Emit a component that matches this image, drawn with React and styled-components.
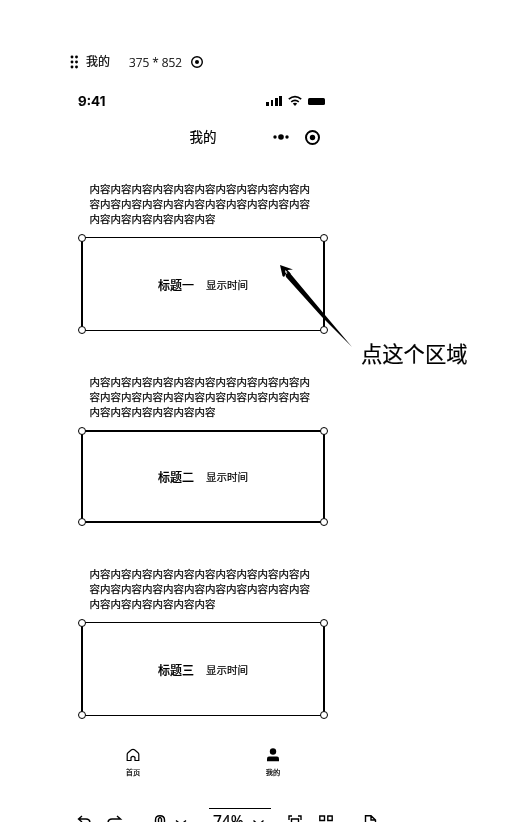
import React from "react";
import styled, { createGlobalStyle } from "styled-components";

const Global = createGlobalStyle`
  * { box-sizing: border-box; }
  html, body { margin: 0; background: #fff; overflow: hidden; }
  body { font-family: "Inter", "Noto Sans CJK SC", sans-serif; color: #000; }
  svg { display: block; flex: none; overflow: visible; }
`;

const Canvas = styled.main`
  position: relative;
  width: 507px;
  height: 822px;
  padding-top: 52px;
  overflow: hidden;
  background: #fff;
  filter: grayscale(1);
  -webkit-text-stroke: 0.2px #000;
`;

const ArtboardHeader = styled.header`
  display: flex;
  align-items: center;
  height: 20px;
  padding-left: 70px;
  font-size: 12px;
  line-height: 20px;
`;

const ArtboardName = styled.span`
  width: 43px;
  margin-left: 7px;
  white-space: nowrap;
`;

const ArtboardSize = styled.span`
  width: 62px;
  font-family: "Noto Sans", sans-serif;
  font-weight: 300;
  font-size: 11.8px;
  white-space: nowrap;
`;

const Phone = styled.section`
  display: flex;
  flex-direction: column;
  width: 280px;
  margin-left: 63px;
`;

const StatusBar = styled.div`
  display: flex;
  align-items: center;
  justify-content: space-between;
  height: 20px;
  margin-top: 19px;
  padding: 0 18px 0 15px;
`;

const Clock = styled.span`
  font-size: 13.6px;
  font-weight: 600;
  line-height: 20px;
`;

const StatusIcons = styled.div`
  display: flex;
  align-items: center;
  gap: 6px;
`;

const TitleBar = styled.div`
  display: grid;
  grid-template-columns: 1fr auto 1fr;
  align-items: center;
  height: 24px;
  margin-top: 14px;
  padding-right: 23px;
`;

const PageTitle = styled.h1`
  grid-column: 2;
  margin: 0 0 0 23px;
  font-size: 13.5px;
  font-weight: 400;
  line-height: 24px;
`;

const Capsule = styled.div`
  display: flex;
  justify-content: flex-end;
  align-items: center;
  gap: 16px;
`;

const Feed = styled.div`
  display: flex;
  flex-direction: column;
  gap: 43px;
  margin-top: 32px;
  padding-left: 18px;
`;

const Entry = styled.article`
  display: flex;
  flex-direction: column;
  gap: 11px;
  height: 149.5px;
`;

const Copy = styled.p`
  width: 222px;
  height: 45px;
  margin: 0 0 0 8.5px;
  font-family: "Noto Sans CJK SC", sans-serif;
  font-size: 10.5px;
  line-height: 15px;
  word-break: break-all;
`;

const Selection = styled.div`
  position: relative;
  display: flex;
  align-items: center;
  gap: 12px;
  width: 244px;
  height: 94px;
  padding: 4px 0 0 75px;
  border-style: solid;
  border-color: #000;
  border-width: ${(p) => (p.$heavy ? "2px" : "1px 2px")};
`;

const Handle = styled.i`
  position: absolute;
  width: 8px;
  height: 8px;
  border: 1.5px solid #000;
  border-radius: 50%;
  background: #fff;
  ${(p) => (p.$bottom ? "bottom" : "top")}: ${(p) => (p.$heavy ? "-5px" : "-4px")};
  ${(p) => (p.$right ? "right" : "left")}: -5px;
`;

const EntryTitle = styled.h2`
  margin: 0;
  font-size: 12px;
  font-weight: 500;
  line-height: 18px;
`;

const EntryTime = styled.span`
  font-size: 10.5px;
  line-height: 18px;
`;

const TabBar = styled.nav`
  display: grid;
  grid-template-columns: 1fr 1fr;
  margin-top: 32px;
`;

const Tab = styled.div`
  display: flex;
  flex-direction: column;
  align-items: center;
  gap: 6px;
  height: 40px;
  font-size: 7.3px;
  line-height: 10px;
`;

const Toolbar = styled.footer`
  display: flex;
  align-items: flex-start;
  height: 26px;
  margin-top: 20px;
  padding-left: 77px;
`;

const Tool = styled.span`
  width: ${(p) => p.$w}px;
  padding-top: 7px;
`;

const Zoom = styled.div`
  display: flex;
  align-items: flex-start;
  gap: 9px;
  width: 62px;
  height: 26px;
  margin-right: 17px;
  padding-left: 4px;
  border-top: 1px solid #000;
  font-family: "Noto Sans", sans-serif;
  font-size: 15.5px;
  line-height: 25px;
`;

const ZoomArrow = styled.span`
  padding-top: 10px;
`;

const Arrow = styled.svg`
  position: absolute;
  left: 279px;
  top: 264px;
`;

const Note = styled.strong`
  position: absolute;
  left: 361px;
  top: 338px;
  font-size: 21.3px;
  font-weight: 400;
  line-height: 32px;
  white-space: nowrap;
`;

const Grip = () => (
  <svg width="9" height="14" viewBox="0 0 9 14">
    {[2, 7, 12].map((y) => [2, 6.5].map((x) => <circle key={`${x}-${y}`} cx={x} cy={y} r="1.45" />))}
  </svg>
);

const Target = ({ size, stroke, dot }) => (
  <svg width={size} height={size} viewBox={`0 0 ${size} ${size}`}>
    <circle cx={size / 2} cy={size / 2} r={(size - stroke) / 2} fill="none" stroke="#000" strokeWidth={stroke} />
    <circle cx={size / 2} cy={size / 2} r={dot} />
  </svg>
);

const Signal = () => (
  <svg width="16" height="10" viewBox="0 0 16 10" shapeRendering="crispEdges">
    <path d="M0 6h3v4H0zM5 4h2v6H5zM9 2h3v8H9zM13 0h3v10h-3z" />
  </svg>
);

const Wifi = () => (
  <svg width="14" height="10" viewBox="0 0 14 10">
    <path d="M.8 3.2Q7-2 13.2 3.2M3.2 5.8Q7 2.8 10.8 5.8" fill="none" stroke="#000" strokeWidth="1.7" />
    <path d="M4.8 7.4Q7 6 9.2 7.4L7 10z" />
  </svg>
);

const Battery = () => (
  <svg width="17" height="7" viewBox="0 0 17 7"><rect width="17" height="7" rx="1.5" /></svg>
);

const More = () => (
  <svg width="16" height="6" viewBox="0 0 16 6">
    <circle cx="2" cy="3" r="1.7" /><circle cx="8" cy="3" r="2.8" /><circle cx="14" cy="3" r="1.7" />
  </svg>
);

const Home = () => (
  <svg width="14" height="14" viewBox="0 0 14 14" fill="none" stroke="#000" strokeWidth="1.2">
    <path d="M1.2 12.5V6.5Q1.2 5.5 2 4.8L5.5 1.8Q7 .8 8.5 1.8L12 4.8Q12.8 5.5 12.8 6.5V12.5H9V9.5Q7 7.2 5 9.5V12.5Z" />
  </svg>
);

const Person = () => (
  <svg width="14" height="14" viewBox="0 0 14 14">
    <circle cx="7" cy="3.5" r="3.2" />
    <path d="M1 13.3V10.5Q1 8.5 3 8.5H11Q13 8.5 13 10.5V13.3Z" />
  </svg>
);

const Stroke = ({ w = 14, d }) => (
  <svg width={w} height="16" viewBox={`0 0 ${w} 16`} fill="none" stroke="#000" strokeWidth="1.4"><path d={d} /></svg>
);

const COPY = "内容".repeat(27);

const entries = [
  { title: "标题一", heavy: false },
  { title: "标题二", heavy: true },
  { title: "标题三", heavy: false },
];

function FeedEntry({ title, heavy }) {
  return (
    <Entry>
      <Copy>{COPY}</Copy>
      <Selection $heavy={heavy}>
        <EntryTitle>{title}</EntryTitle>
        <EntryTime>显示时间</EntryTime>
        <Handle $heavy={heavy} />
        <Handle $heavy={heavy} $right />
        <Handle $heavy={heavy} $bottom />
        <Handle $heavy={heavy} $bottom $right />
      </Selection>
    </Entry>
  );
}

export default function App() {
  return (
    <Canvas>
      <Global />
      <ArtboardHeader>
        <Grip />
        <ArtboardName>我的</ArtboardName>
        <ArtboardSize>375 * 852</ArtboardSize>
        <Target size={12} stroke={1.4} dot={2} />
      </ArtboardHeader>
      <Phone>
        <StatusBar>
          <Clock>9:41</Clock>
          <StatusIcons><Signal /><Wifi /><Battery /></StatusIcons>
        </StatusBar>
        <TitleBar>
          <PageTitle>我的</PageTitle>
          <Capsule><More /><Target size={15} stroke={2} dot={2.7} /></Capsule>
        </TitleBar>
        <Feed>
          {entries.map((e) => <FeedEntry key={e.title} {...e} />)}
        </Feed>
        <TabBar>
          <Tab><Home />首页</Tab>
          <Tab><Person />我的</Tab>
        </TabBar>
      </Phone>
      <Toolbar>
        <Tool $w={30}><Stroke d="M5 1 1.5 4 5 7M1.5 4H9Q13 4 13 8" /></Tool>
        <Tool $w={47}><Stroke d="M10 1 13.5 4H5Q1 4 1 8" /></Tool>
        <Tool $w={21}><Stroke w={12} d="M1.5 10V5Q1.5.8 6 .8T10.5 5V10M4.5 8V4Q6 1 7.5 4V8" /></Tool>
        <Tool $w={34}><Stroke w={12} d="M1 5.5 6 9.5 11 5.5" /></Tool>
        <Zoom>74%<ZoomArrow><Stroke w={11} d="M.5 1.5 5.5 6 10.5 1.5" /></ZoomArrow></Zoom>
        <Tool $w={31}><Stroke d="M1 5V1H4M10 1H13V5M3.5 9V4H10.5V9" /></Tool>
        <Tool $w={45}><Stroke d="M.8 1H5.5V5.5H.8ZM8.8 1H13.2V5.5H8.8ZM.8 8.5H5.5V12H.8M8.8 8.5H13.2" /></Tool>
        <Tool $w={14}><Stroke w={13} d="M1.5 12V.8H7L11.5 5V12M7 .8V5H11.5" /></Tool>
      </Toolbar>
      <Arrow width="75" height="85" viewBox="0 0 75 85">
        <path d="M6.5 10.5 10 8 46 51 73 83 43 53 7 13Z" />
        <path d="M1 1 14 5.5 8.5 6 12 10 7.5 9 5 13 3.5 12Z" />
        <path d="M6 6 8.5 8.2 6.5 9Z" fill="#fff" />
      </Arrow>
      <Note>点这个区域</Note>
    </Canvas>
  );
}
